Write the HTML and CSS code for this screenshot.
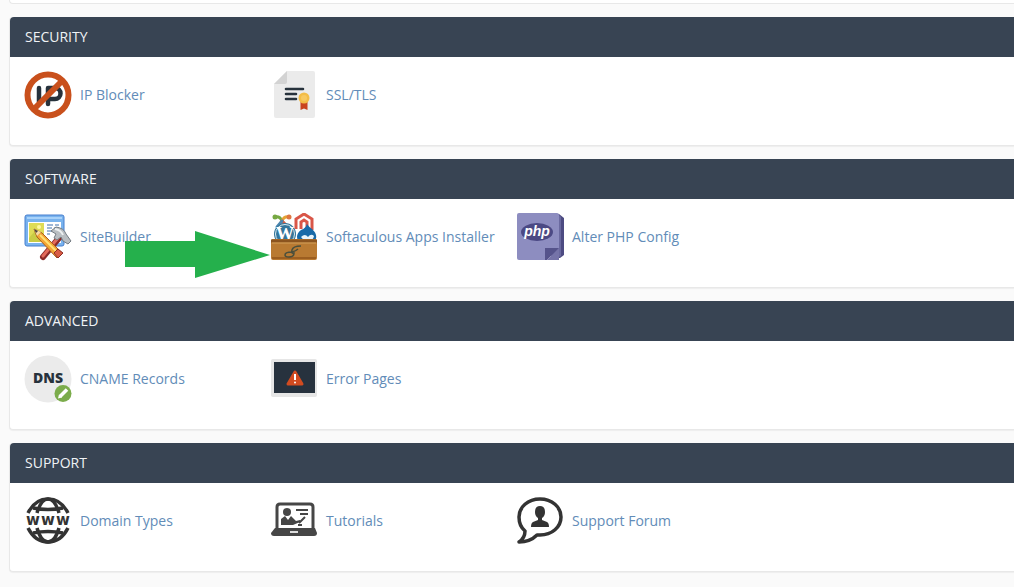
FILE: index.html
```html
<!DOCTYPE html>
<html lang="en">

<head>
    <meta charset="UTF-8" />
    <meta name="viewport" content="width=device-width, initial-scale=1" />
    <title>cPanel</title>
    <link rel="stylesheet" href="styles.css">
</head>

<body>
    <main class="content">
        <div class="panel-end"></div>

        <section class="panel">
            <h2 class="panel-title">SECURITY</h2>
            <div class="panel-body">
                <a class="item" href="#">
                    <svg class="icon" viewBox="0 0 48 48" aria-hidden="true">
                        <circle cx="24" cy="24" r="20.5" fill="#fff" stroke="#c9501c" stroke-width="6" />
                        <path d="M15 17v14M24 33V17h7a5.500 5.500 0 0 1 0 11h-7" fill="none" stroke="#27323c" stroke-width="4.500" stroke-linecap="round" stroke-linejoin="round" />
                        <path d="M10 38L38 10" stroke="#c9501c" stroke-width="6" />
                    </svg>
                    <span>IP Blocker</span>
                </a>
                <a class="item" href="#">
                    <svg class="icon" viewBox="0 0 48 48" aria-hidden="true">
                        <path d="M17 0h26a2 2 0 0 1 2 2v43a2 2 0 0 1-2 2H6a2 2 0 0 1-2-2V13z" fill="#ebebeb" />
                        <path d="M17 0v11a2 2 0 0 1-2 2H4z" fill="#d3d3d3" />
                        <path d="M16 18h17M16 23h10M16 28h10" stroke="#27323c" stroke-width="2.600" stroke-linecap="round" />
                        <path d="M30.500 30h7v9l-3.500-1.500-3.500 1.500z" fill="#c9431f" />
                        <circle cx="34" cy="27" r="5.500" fill="#f3bd48" />
                        <circle cx="34" cy="27" r="3" fill="#f7c961" />
                    </svg>
                    <span>SSL/TLS</span>
                </a>
            </div>
        </section>

        <section class="panel">
            <h2 class="panel-title">SOFTWARE</h2>
            <div class="panel-body">
                <a class="item" href="#">
                    <svg class="icon" viewBox="0 0 48 48" aria-hidden="true">
                        <rect x="1" y="2" width="39" height="31" rx="2" fill="#79b3ee" stroke="#477fce" />
                        <path d="M3 5h35" stroke="#a8d2fa" stroke-width="2" />
                        <rect x="4" y="9" width="33" height="21" fill="#fff" />
                        <rect x="5" y="10" width="15" height="19" fill="#dfdc57" />
                        <path d="M5 25l6-7 5 5v6H5z" fill="#c9cc45" />
                        <circle cx="15" cy="14" r="2" fill="#fff7a2" />
                        <path d="M23 12h6M31 12h4M23 15h5M30 15h5M23 18h7M23 21h3" stroke="#3f70ad" />
                        <path d="M19 44L35 25" stroke="#8c2a28" stroke-width="6" stroke-linecap="round" />
                        <path d="M19 43L34 25" stroke="#e3695a" stroke-width="3" stroke-linecap="round" />
                        <path d="M27 18l5-4q8 1 10 7l5 7-3 3-5-3-2-4-4 3-3-2 2-4z" fill="#b9bec2" stroke="#747c83" />
                        <path d="M31 16q6 1 8 6" fill="none" stroke="#eef1f2" stroke-width="2" />
                        <path d="M10 16l8 4 20 20-5 5-20-21z" fill="#f3a536" stroke="#a95e1c" />
                        <path d="M16 22l19 19" stroke="#ffe173" stroke-width="2" />
                        <path d="M34 36l5 4-5 5-4-5z" fill="#d95c45" stroke="#8c2d25" />
                        <path d="M10 16l7 3-4 4z" fill="#f4dba6" />
                        <path d="M10 16l4 2-2 2z" fill="#4b443c" />
                    </svg>
                    <span>SiteBuilder</span>
                </a>
                <a class="item" href="#">
                    <svg class="icon" viewBox="0 0 48 48" aria-hidden="true">
                        <g fill="none" stroke-width="3" stroke-linecap="round">
                            <path d="M5 4q5-1 7 4l4 5" stroke="#76a842" />
                            <path d="M19 4q-5-1-7 4l-4 6" stroke="#e5a334" />
                            <path d="M12 8l5 5" stroke="#df5a40" />
                            <path d="M12 8l-5 6" stroke="#4d86b1" />
                        </g>
                        <circle cx="5" cy="4" r="2.500" fill="#76a842" />
                        <circle cx="19" cy="4" r="2.500" fill="#df7640" />
                        <path d="M26 16V6l8-5 8 5v11M31 16V9l3-2 3 2v7" fill="none" stroke="#d95648" stroke-width="3" />
                        <circle cx="15" cy="21" r="11" fill="#34769b" />
                        <circle cx="15" cy="21" r="9.500" fill="none" stroke="#deedf3" />
                        <text class="wp-label" x="15" y="27" text-anchor="middle">W</text>
                        <path d="M37 11q2 3 5 5 8 7 1 16H31q-8-9 0-15 5-2 6-6z" fill="#176aa8" />
                        <path d="M31 24q4-4 7 0 3-4 6-1-1 5-5 3-4 4-8-2z" fill="#e7f4fb" />
                        <path d="M2 26h44l1 2v17a2 2 0 0 1-2 2H3a2 2 0 0 1-2-2V28z" fill="#b97a32" />
                        <path d="M1 28h46" stroke="#8b541f" stroke-width="3" />
                        <path d="M2 30h44" stroke="#d3a05a" />
                        <path d="M2 45h44" stroke="#9c5e20" stroke-width="2" />
                        <path d="M31 33q-8 0-9 4t2 3q0 4-5 4-4 0-4-2 0-3 7-3 4-1 6-3" fill="none" stroke="#4a4f3c" stroke-width="1.500" />
                    </svg>
                    <span>Softaculous Apps Installer</span>
                </a>
                <a class="item" href="#">
                    <svg class="icon" viewBox="0 0 48 48" aria-hidden="true">
                        <path d="M39 1h4l5 4v37l-4 3h-9z" fill="#4d4b82" />
                        <path d="M3 0h38a2 2 0 0 1 2 2v33L30 47H3a2 2 0 0 1-2-2V2a2 2 0 0 1 2-2z" fill="#8d8dc0" />
                        <path d="M43 2l2 2v39l-2 1z" fill="#6a699f" />
                        <path d="M29 35h14L31 47h-2z" fill="#55538b" />
                        <path d="M43 35v12H31z" fill="#7573a8" />
                        <ellipse cx="21" cy="19" rx="16" ry="9" fill="#4b4984" />
                        <text class="php-label" x="21" y="23" text-anchor="middle">php</text>
                    </svg>
                    <span>Alter PHP Config</span>
                </a>
            </div>
        </section>

        <section class="panel">
            <h2 class="panel-title">ADVANCED</h2>
            <div class="panel-body">
                <a class="item" href="#">
                    <svg class="icon" viewBox="0 0 48 48" aria-hidden="true">
                        <circle cx="24" cy="24" r="23.500" fill="#ebebeb" />
                        <text class="dns-label" x="24" y="28" text-anchor="middle">DNS</text>
                        <circle cx="39" cy="38.500" r="8.500" fill="#7bac4b" />
                        <path d="M36 41.500l7-7" stroke="#fff" stroke-width="3.500" />
                        <path d="M34 43.500l1-4 3 3z" fill="#fff" />
                    </svg>
                    <span>CNAME Records</span>
                </a>
                <a class="item" href="#">
                    <svg class="icon" viewBox="0 0 48 48" aria-hidden="true">
                        <rect x="1" y="4" width="46" height="38" rx="2" fill="#e6e6e6" />
                        <rect x="4" y="7" width="41" height="31" fill="#27323e" />
                        <path d="M25 17l7 12H18z" fill="#d14b20" stroke="#d14b20" stroke-width="3" stroke-linejoin="round" />
                        <path d="M25 19v6" stroke="#fff" stroke-width="2" />
                        <circle cx="25" cy="27.500" r="1" fill="#fff" />
                    </svg>
                    <span>Error Pages</span>
                </a>
            </div>
        </section>

        <section class="panel">
            <h2 class="panel-title">SUPPORT</h2>
            <div class="panel-body">
                <a class="item" href="#">
                    <svg class="icon" viewBox="0 0 48 48" aria-hidden="true">
                        <g fill="none" stroke="#333" stroke-width="3.500">
                            <path d="M4 16Q11 2 24 2t20 14M4 31q7 14 20 14t20-14" />
                            <path d="M13 16Q17 2 24 2t11 14M13 31q4 14 11 14t11-14" />
                            <path d="M9 11q15 3 30 0M9 36q15-3 30 0" />
                        </g>
                        <!-- one letter per third of the globe -->
                        <g class="www-label" text-anchor="middle">
                            <text x="9" y="28">w</text>
                            <text x="24" y="28">w</text>
                            <text x="39" y="28">w</text>
                        </g>
                    </svg>
                    <span>Domain Types</span>
                </a>
                <a class="item" href="#">
                    <svg class="icon" viewBox="0 0 48 48" aria-hidden="true">
                        <path d="M7 33V10q0-3 3-3h30q3 0 3 3v23" fill="#fff" stroke="#464646" stroke-width="3" />
                        <path d="M5 31h40l2 5q0 3-3 3H4q-3 0-3-3z" fill="#464646" />
                        <path d="M20 35h8" stroke="#ddd" stroke-width="2" />
                        <circle cx="17" cy="15" r="4" fill="#464646" />
                        <path d="M11 28v-6l4-3 3 4 3-4 5 5 4-1v2l-7 3z" fill="#464646" />
                        <path d="M29 26l6-6M26 13h12M30 17h8M28 28h4" stroke="#464646" stroke-width="2" />
                    </svg>
                    <span>Tutorials</span>
                </a>
                <a class="item" href="#">
                    <svg class="icon" viewBox="0 0 48 48" aria-hidden="true">
                        <path d="M24 2c12 0 21 8 21 18S36 38 24 38h-3q-7 7-18 7 6-4 6-11Q3 29 3 20C3 10 12 2 24 2z" fill="#fff" stroke="#333" stroke-width="3.500" stroke-linejoin="round" />
                        <path d="M24 9q-5 0-5 6 0 4 3 6v2l-5 2q-2 1-2 5h18q0-4-2-5l-5-2v-2q3-2 3-6 0-6-5-6z" fill="#333" />
                    </svg>
                    <span>Support Forum</span>
                </a>
            </div>
        </section>

        <!-- arrow pointing at the installer -->
        <svg class="arrow" viewBox="0 0 145 47" aria-hidden="true">
            <path d="M0 10h70V0l75 24-75 23V36H0z" fill="#25b04c" />
        </svg>
    </main>
</body>

</html>
```

FILE: styles.css
```css
* {
    box-sizing: border-box;
}

body {
    margin: 0;
    background: #fff;
    font-family: "Open Sans", sans-serif;
    font-size: 14px;
    line-height: 20px;
}

.content {
    position: relative;
    min-height: 100vh;
    margin-right: 10px;
    padding-left: 9px;
    overflow: hidden;
    background: #fafafa;
}

/* bottom edge of the panel scrolled off the top */
.panel-end {
    height: 4px;
    margin-bottom: 13px;
    background: #fff;
    border: 1px solid #e8e8e8;
    border-width: 0 0 1px 1px;
    border-radius: 0 0 0 4px;
}

.panel {
    margin-bottom: 13px;
    background: #fff;
    border: 1px solid #e8e8e8;
    border-width: 0 0 1px 1px;
    border-radius: 4px 0 0 4px;
    box-shadow: 0 1px 1px rgba(0, 0, 0, 0.05);
}

.panel-title {
    margin: 0;
    padding: 10px 15px;
    background: #384453;
    border-radius: 4px 0 0 0;
    color: #f0f3f6;
    font-size: 14px;
    font-weight: 400;
}

.panel-body {
    display: grid;
    grid-template-columns: repeat(4, 1fr);
    padding: 14px 10px 26px;
}

.item {
    display: flex;
    align-items: center;
    gap: 8px;
    padding-left: 4px;
    color: #628cb8;
    text-decoration: none;
}

.item:hover {
    text-decoration: underline;
}

.icon {
    flex: none;
    width: 48px;
    height: 48px;
}

.php-label {
    fill: #fff;
    font-family: "Liberation Sans", sans-serif;
    font-size: 14px;
    font-style: italic;
    font-weight: 700;
}

.dns-label {
    fill: #27323c;
    font-size: 14px;
    font-weight: 800;
}

.wp-label {
    fill: #fff;
    font-family: "Liberation Serif", serif;
    font-size: 18px;
    font-weight: 700;
}

.www-label {
    fill: #333;
    font-family: "DejaVu Sans", sans-serif;
    font-size: 15px;
    font-weight: 700;
}

.arrow {
    position: absolute;
    top: 231px;
    left: 125px;
    width: 145px;
    height: 47px;
    pointer-events: none;
}
```
